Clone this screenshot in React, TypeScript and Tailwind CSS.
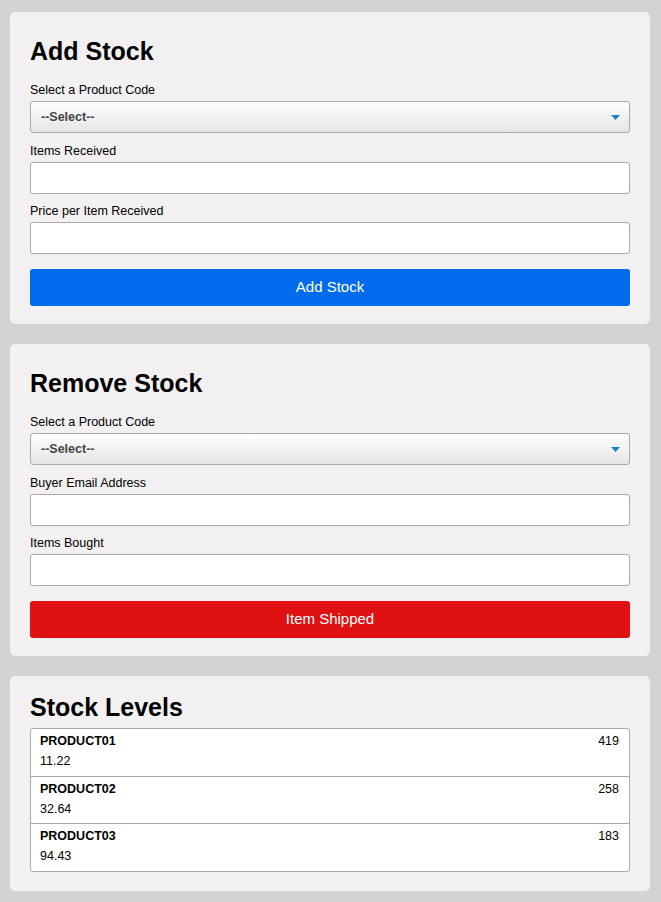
import React from "react";

const font = { fontFamily: '"Liberation Sans", Arial, sans-serif' };

function Label({ children }: { children: React.ReactNode }) {
  return <div className="text-[12.5px] leading-[15px] text-black mb-[3px]">{children}</div>;
}

function SelectBox() {
  return (
    <div className="relative h-[32px] w-full rounded-[3px] border border-[#aaaaaa] bg-gradient-to-b from-[#ffffff] to-[#e5e5e5] flex items-center px-[10px]">
      <span className="text-[12.5px] font-bold text-[#444444]">--Select--</span>
      <svg className="absolute right-[9px] top-[13px]" width="9" height="5" viewBox="0 0 9 5">
        <path d="M0 0 H9 L4.5 5 Z" fill="#1a80c0" />
      </svg>
    </div>
  );
}

function Input() {
  return <div className="h-[32px] w-full rounded-[3px] border border-[#aaaaaa] bg-white" />;
}

function Field({ label, children }: { label: string; children: React.ReactNode }) {
  return (
    <div className="flex flex-col">
      <Label>{label}</Label>
      {children}
    </div>
  );
}

export default function App() {
  const rows = [
    { code: "PRODUCT01", price: "11.22", qty: "419" },
    { code: "PRODUCT02", price: "32.64", qty: "258" },
    { code: "PRODUCT03", price: "94.43", qty: "183" },
  ];
  return (
    <div className="min-h-[902px] w-full bg-[#d3d3d3] pl-[10px] pt-[12px] pb-[11px] flex flex-col gap-[20px]" style={font}>
      <div className="w-[640px] rounded-[5px] bg-[#f2f0f1] px-[20px] pt-[24px] pb-[18px]">
        <h2 className="text-[25px] leading-[30px] font-bold text-black mb-[17px]">Add Stock</h2>
        <div className="flex flex-col gap-[10.5px]">
          <Field label="Select a Product Code"><SelectBox /></Field>
          <Field label="Items Received"><Input /></Field>
          <Field label="Price per Item Received"><Input /></Field>
        </div>
        <button className="mt-[15px] h-[37px] w-full rounded-[3px] bg-[#006ced] text-white text-[15px]">Add Stock</button>
      </div>

      <div className="w-[640px] rounded-[5px] bg-[#f2f0f1] px-[20px] pt-[24px] pb-[18px]">
        <h2 className="text-[25px] leading-[30px] font-bold text-black mb-[17px]">Remove Stock</h2>
        <div className="flex flex-col gap-[10.5px]">
          <Field label="Select a Product Code"><SelectBox /></Field>
          <Field label="Buyer Email Address"><Input /></Field>
          <Field label="Items Bought"><Input /></Field>
        </div>
        <button className="mt-[15px] h-[37px] w-full rounded-[3px] bg-[#e01113] text-white text-[15px]">Item Shipped</button>
      </div>

      <div className="w-[640px] rounded-[5px] bg-[#f2f0f1] px-[20px] pt-[16px] pb-[19px]">
        <h2 className="text-[25px] leading-[30px] font-bold text-black mb-[6px]">Stock Levels</h2>
        <div className="rounded-[3px] border border-[#aaaaaa] bg-white">
          {rows.map((r, i) => (
            <div key={r.code} className={`flex justify-between pl-[9px] pr-[10px] pt-[5px] pb-[6.5px] ${i > 0 ? "border-t border-[#aaaaaa]" : ""}`}>
              <div className="flex flex-col gap-[5px] text-[12.5px] leading-[15px] text-black">
                <span className="font-bold">{r.code}</span>
                <span>{r.price}</span>
              </div>
              <span className="text-[12.5px] leading-[15px] text-black">{r.qty}</span>
            </div>
          ))}
        </div>
      </div>
    </div>
  );
}
